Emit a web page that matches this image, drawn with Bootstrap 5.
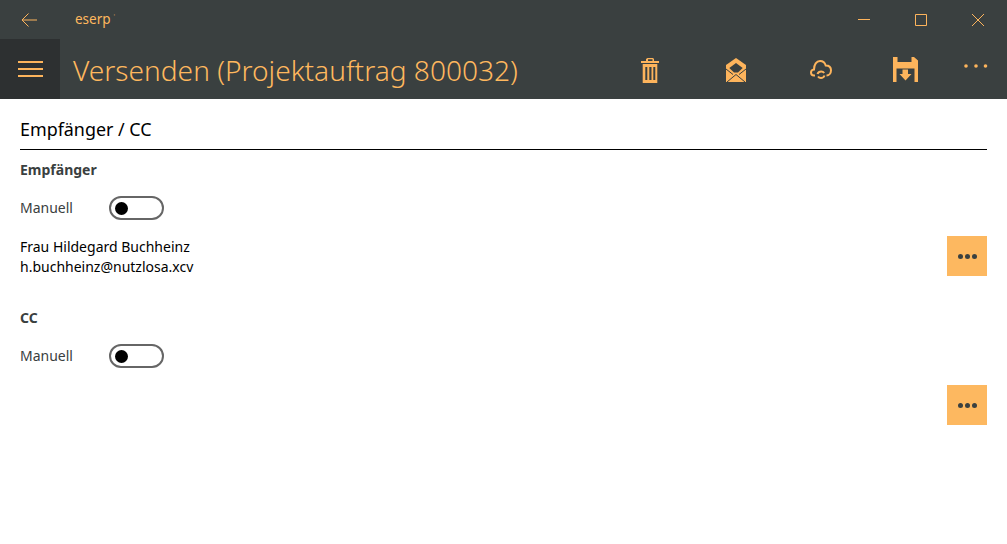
<!DOCTYPE html>
<html lang="de">

<head>
  <meta charset="UTF-8" />
  <meta name="viewport" content="width=device-width, initial-scale=1" />
  <title>eserp</title>
  <link href="https://cdn.jsdelivr.net/npm/bootstrap@5.3.3/dist/css/bootstrap.min.css" rel="stylesheet" />
  <style>
    html, body {
      height: 100%;
      overflow: hidden;
    }

    body {
      font-family: "Noto Sans", "Open Sans", sans-serif;
      background: #fff;
      color: #000;
    }

    .app-head {
      background: #3a4040;
      color: #ffb85e;
    }

    .title-bar {
      height: 39px;
    }

    .back-btn {
      width: 58px;
      margin-right: 2px;
    }

    .app-name {
      font-size: 13.5px;
      margin-left: 15px;
    }

    .app-name span {
      font-size: 7px;
      vertical-align: 5px;
      margin-left: 3px;
      opacity: .6;
    }

    .win-btns {
      margin-right: 1px;
    }

    .win-btn {
      width: 57px;
      height: 39px;
    }

    .tool-bar {
      height: 60px;
    }

    .burger {
      width: 60px;
      background: #2d3031;
    }

    .page-title {
      font-size: 28.1px;
      margin-left: 13px;
      line-height: 1;
      font-weight: 300;
      padding-top: 3px;
    }

    .tool-btns {
      margin-right: 3px;
    }

    .tool-btn {
      width: 85px;
      padding-top: 2px;
    }

    .tool-trash {
      padding: 3px 1px 0 0;
    }

    .tool-even {
      padding-left: 1px;
    }

    .tool-save {
      padding-top: 1px;
    }

    .tool-more {
      width: 56px;
      padding-bottom: 6px;
    }

    .page-body {
      padding: 17px 20px 0;
    }

    .sect-title {
      font-size: 17.9px;
      line-height: 26px;
      padding-bottom: 7px;
      border-bottom: 1px solid #000;
    }

    .group-title {
      font-size: 14px;
      font-weight: 700;
      color: #3a4040;
      line-height: 20px;
    }

    .group-first {
      margin-top: 10px;
    }

    .group-cc {
      margin-top: 31px;
    }

    .switch-row {
      height: 24px;
      margin-top: 16px;
      font-size: 14px;
      color: #3a4040;
    }

    .switch-label {
      width: 89px;
      margin-bottom: 2px;
    }

    .toggle-off {
      width: 55px;
      height: 24px;
      border: 2.5px solid #666;
      border-radius: 12px;
      padding-left: 4px;
    }

    .toggle-off span {
      width: 13px;
      height: 13px;
      background: #000;
      border-radius: 50%;
    }

    .person-text {
      margin-top: 17px;
      font-size: 14px;
      line-height: 20px;
    }

    .pick-btn {
      width: 40px;
      height: 40px;
      background: #fdb860;
      gap: 2px;
    }

    .pick-first {
      margin-top: 16px;
    }

    .pick-last {
      margin-top: 17px;
    }

    .pick-btn span {
      width: 5px;
      height: 5px;
      background: #3a4040;
      border-radius: 50%;
    }
  </style>
</head>

<body>

  <div class="app-head">
    <div class="title-bar d-flex align-items-center">
      <div class="back-btn d-flex justify-content-center">
        <svg width="16" height="14" viewBox="0 0 16 14" fill="none" stroke="#fdb45c" stroke-width="1">
          <path d="M7.500 .5 1 7l6.500 6.500M1 7h15" />
        </svg>
      </div>
      <div class="app-name">eserp<span>'</span></div>
      <div class="win-btns ms-auto d-flex">
        <div class="win-btn d-flex align-items-center justify-content-center">
          <svg width="12" height="12" viewBox="0 0 12 12" stroke="#fdb45c" fill="none"><path d="M0 5.500h12" /></svg>
        </div>
        <div class="win-btn d-flex align-items-center justify-content-center">
          <svg width="12" height="12" viewBox="0 0 12 12" stroke="#fdb45c" fill="none"><path d="M.5 .5h11v11H.5z" /></svg>
        </div>
        <div class="win-btn d-flex align-items-center justify-content-center">
          <svg width="12" height="12" viewBox="0 0 12 12" stroke="#fdb45c" fill="none"><path d="M0 0l12 12M12 0 0 12" /></svg>
        </div>
      </div>
    </div>

    <div class="tool-bar d-flex align-items-stretch">
      <div class="burger d-flex align-items-center justify-content-center">
        <svg width="25" height="17" viewBox="0 0 25 17" fill="#fdb45c">
          <path d="M0 0h25v2H0zM0 7h25v2H0zM0 14h25v2H0z" />
        </svg>
      </div>
      <div class="page-title d-flex align-items-center">Versenden (Projektauftrag 800032)</div>
      <div class="tool-btns ms-auto d-flex">
        <div class="tool-btn tool-trash d-flex align-items-center justify-content-center">
          <!-- trash -->
          <svg width="18" height="25" viewBox="0 0 18 25" fill="#fdb45c">
            <path fill-rule="evenodd" d="M6.500 0h5.500l1 1v2h5v2H0V3h5V1zm.5 1.200V3h4.500V1.200zM1.700 6h14.600v19H1.700zm2.600 3v13h2V9zm4 0v13h2.200V9zm4 0v13h2V9z" />
          </svg>
        </div>
        <div class="tool-btn tool-even d-flex align-items-center justify-content-center">
          <!-- open envelope -->
          <svg width="20" height="24" viewBox="0 0 20 24">
            <path fill="#fdb45c" d="M10 0l10 7v17H0V7z" />
            <path fill="#3a4040" d="M10 5l6.700 5-4.700 4.500H8L3.300 10z" />
            <path fill="none" stroke="#3a4040" stroke-width="1" d="M0 11l7 5.500M20 11l-7 5.500M1 24l9-7.500 9 7.500" />
          </svg>
        </div>
        <div class="tool-btn tool-even d-flex align-items-center justify-content-center">
          <!-- cloud sync -->
          <svg width="22" height="20" viewBox="0 0 22 20" fill="none" stroke="#fdb45c" stroke-width="2">
            <path d="M5 15.500H4C2 15.500 1 14 1 12.500c0-1.500 1-2.800 3-3C4 4.500 6.500 1 10 1c3 0 5 2 5.700 4.500 3.300 0 5.300 2 5.300 4.800 0 2.700-1.800 5.200-4.500 5.200" />
            <path d="M7.500 14c.6-1.600 2-2.500 3.700-2.500 1.300 0 2.300.5 3 1.500M14.500 15.500c-.6 1.600-2 2.500-3.500 2.500-1.300 0-2.300-.5-3-1.500" />
          </svg>
        </div>
        <div class="tool-btn tool-save d-flex align-items-center justify-content-center">
          <!-- save -->
          <svg width="25" height="25" viewBox="0 0 25 25" fill="#fdb45c">
            <path d="M0 0h4.500v5h14V0h2.500L25 3.500V25h-3.500V11.500h-18V25H0zM9.500 12.500h5.500V17h3.500l-6 6.500-6-6.500h3z" />
          </svg>
        </div>
        <div class="tool-more d-flex align-items-center justify-content-center">
          <svg width="24" height="4" viewBox="0 0 24 4" fill="#fdb45c">
            <circle cx="2" cy="2" r="1.800" /><circle cx="12" cy="2" r="1.800" /><circle cx="21.500" cy="2" r="1.800" />
          </svg>
        </div>
      </div>
    </div>
  </div>

  <div class="page-body">
    <div class="sect-title">Empfänger / CC</div>

    <div class="group-title group-first">Empfänger</div>
    <div class="switch-row d-flex align-items-center">
      <div class="switch-label">Manuell</div>
      <div class="toggle-off d-flex align-items-center"><span></span></div>
    </div>
    <div class="d-flex align-items-start justify-content-between">
      <div class="person-text">
        <div>Frau Hildegard Buchheinz</div>
        <div>h.buchheinz@nutzlosa.xcv</div>
      </div>
      <div class="pick-btn d-flex align-items-center justify-content-center pick-first">
        <span></span><span></span><span></span>
      </div>
    </div>

    <div class="group-cc group-title">CC</div>
    <div class="switch-row d-flex align-items-center">
      <div class="switch-label">Manuell</div>
      <div class="toggle-off d-flex align-items-center"><span></span></div>
    </div>
    <div class="d-flex justify-content-end">
      <div class="pick-btn d-flex align-items-center justify-content-center pick-last">
        <span></span><span></span><span></span>
      </div>
    </div>
  </div>

  <script src="https://cdn.jsdelivr.net/npm/bootstrap@5.3.3/dist/js/bootstrap.bundle.min.js"></script>
</body>

</html>
